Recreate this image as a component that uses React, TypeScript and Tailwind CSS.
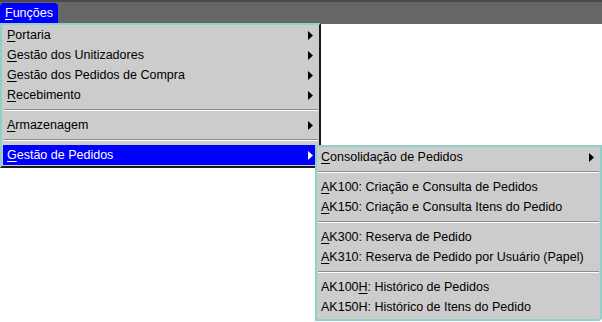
import React from 'react'

type Item = { label: string; u: number; sub?: boolean; active?: boolean } | 'sep'

const mainItems: Item[] = [
  { label: 'Portaria', u: 0, sub: true },
  { label: 'Gestão dos Unitizadores', u: 0, sub: true },
  { label: 'Gestão dos Pedidos de Compra', u: 0, sub: true },
  { label: 'Recebimento', u: 0, sub: true },
  'sep',
  { label: 'Armazenagem', u: 0, sub: true },
  'sep',
  { label: 'Gestão de Pedidos', u: 0, sub: true, active: true },
]

const subItems: Item[] = [
  { label: 'Consolidação de Pedidos', u: 0, sub: true },
  'sep',
  { label: 'AK100: Criação e Consulta de Pedidos', u: 0 },
  { label: 'AK150: Criação e Consulta Itens do Pedido', u: 0 },
  'sep',
  { label: 'AK300: Reserva de Pedido', u: 0 },
  { label: 'AK310: Reserva de Pedido por Usuário (Papel)', u: 0 },
  'sep',
  { label: 'AK100H: Histórico de Pedidos', u: 5 },
  { label: 'AK150H: Histórico de Itens do Pedido', u: -1 },
]

function Label({ text, u }: { text: string; u: number }) {
  if (u < 0) return <span className="whitespace-nowrap">{text}</span>
  return (
    <span className="whitespace-nowrap">
      {text.slice(0, u)}
      <span className="underline underline-offset-2">{text[u]}</span>
      {text.slice(u + 1)}
    </span>
  )
}

function Arrow({ white }: { white?: boolean }) {
  return (
    <svg width="5" height="9" viewBox="0 0 5 9" className="shrink-0">
      <path d="M0 0 L5 4.5 L0 9 Z" fill={white ? '#ffffff' : '#000000'} />
    </svg>
  )
}

function MenuList({ items, pad }: { items: Item[]; pad: string }) {
  return (
    <div className="flex flex-col">
      {items.map((it, i) =>
        it === 'sep' ? (
          <div key={i} className="my-[4px] h-[2px] border-t border-b border-t-[#8c8c8c] border-b-white mx-[1px]" />
        ) : (
          <div
            key={i}
            className={`flex h-[20px] items-center justify-between ${pad} ${
              it.active ? 'bg-[#0000ff] text-white' : 'text-black'
            }`}
          >
            <Label text={it.label} u={it.u} />
            {it.sub && <Arrow white={it.active} />}
          </div>
        )
      )}
    </div>
  )
}

export default function App() {
  return (
    <div
      className="relative h-[322px] w-[602px] overflow-hidden bg-white text-[12.5px] leading-none"
      style={{ fontFamily: '"Liberation Sans", Arial, sans-serif' }}
    >
      {/* menu bar */}
      <div className="flex h-[24px] items-end border-t-2 border-[#4a4a4a] bg-[#666666]">
        <div className="flex h-[21px] items-center rounded-t-[4px] bg-[#0000ff] px-[5px] text-white">
          <Label text="Funções" u={0} />
        </div>
      </div>

      {/* dropdown */}
      <div className="absolute left-0 top-[23px] w-[321px] border-2 border-l-[#8fd0c8] border-t-[#8fd0c8] border-r-[#1a1a1a] border-b-[#1a1a1a] bg-[#cccccc] pl-[1px] pb-[1px]">
        <MenuList items={mainItems} pad="pl-[4px] pr-[6px]" />
      </div>

      {/* submenu */}
      <div className="absolute left-[315px] top-[145px] w-[287px] rounded-br-[4px] border-2 border-[#8fd0c8] bg-[#cccccc] pb-[2px]">
        <MenuList items={subItems} pad="pl-[4px] pr-[6px]" />
      </div>
    </div>
  )
}
